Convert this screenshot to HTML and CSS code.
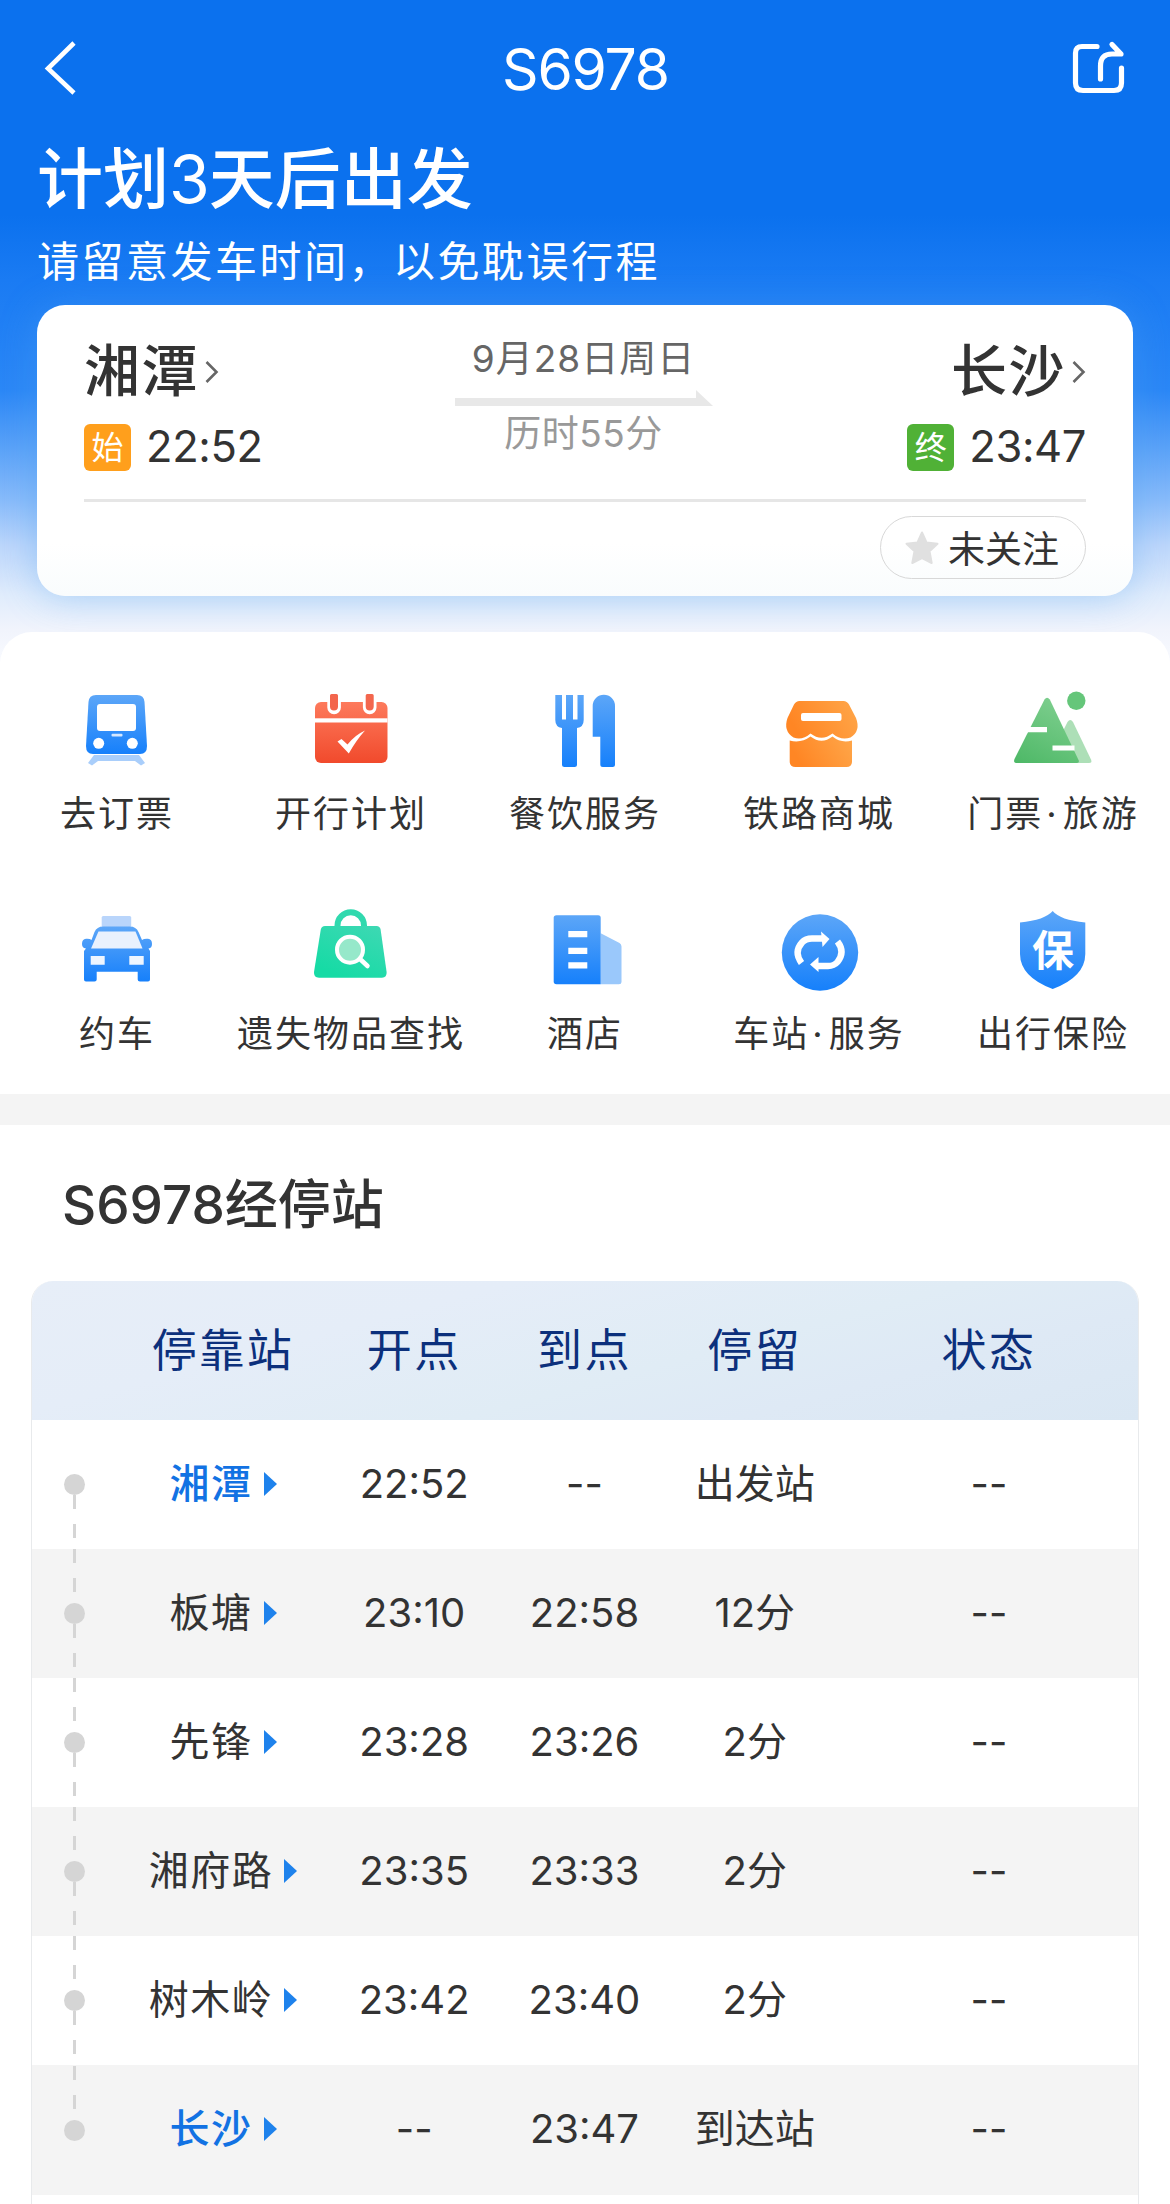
FILE: index.html
```html
<!DOCTYPE html>
<html lang="zh-CN">
<head>
  <meta charset="UTF-8" />
  <meta name="viewport" content="width=device-width, initial-scale=1.0" />
  <title>S6978</title>
  <link rel="stylesheet" href="styles.css">
</head>
<body>
  <svg class="defs" width="0" height="0">
    <defs>
      <linearGradient id="blue" x1="0" y1="0" x2="0" y2="1"><stop offset="0" stop-color="#5ca6f8"/><stop offset="1" stop-color="#1680fb"/></linearGradient>
      <linearGradient id="red" x1="0" y1="0" x2="0" y2="1"><stop offset="0" stop-color="#fd7a5c"/><stop offset="1" stop-color="#f14a2c"/></linearGradient>
      <linearGradient id="orange" x1="0" y1="0.3" x2="1" y2="0"><stop offset="0" stop-color="#ff8624"/><stop offset="1" stop-color="#ffa74a"/></linearGradient>
      <linearGradient id="green" x1="0" y1="1" x2="0.5" y2="0"><stop offset="0" stop-color="#4db866"/><stop offset="1" stop-color="#7bcd8c"/></linearGradient>
      <linearGradient id="mint" x1="1" y1="0" x2="0.4" y2="1"><stop offset="0" stop-color="#3fd8b4"/><stop offset="1" stop-color="#16dba5"/></linearGradient>
    </defs>
  </svg>

  <div class="hero">
    <header class="nav">
      <svg class="back" viewBox="0 0 34 58"><path d="M30 4 4 29.500 30 54" fill="none" stroke="#fff" stroke-width="4.600"/></svg>
      <h1>S6978</h1>
      <svg class="share" viewBox="0 0 56 56" fill="none" stroke="#fff" stroke-width="5.200" stroke-linecap="round" stroke-linejoin="round">
        <path d="M26 6.500H11Q4.500 6.500 4.500 13V43Q4.500 50.500 12 50.500H43Q50.500 50.500 50.500 43V28"/>
        <path d="M29.500 39V26Q29.500 14 41 14H50L41 4.500"/>
      </svg>
    </header>

    <h2 class="plan">计划<span>3</span>天后出发</h2>
    <p class="tip">请留意发车时间，以免耽误行程</p>

    <div class="trip">
      <div class="trip-main">
        <div class="end">
          <div class="city">湘潭<svg class="more" viewBox="0 0 14 24"><path d="M1.500 2 11.500 12 1.500 22" fill="none" stroke="#666" stroke-width="2.600"/></svg></div>
          <div class="time"><span class="tag start">始</span>22:52</div>
        </div>
        <div class="middle">
          <div class="date">9月28日周日</div>
          <svg class="line" viewBox="0 0 258 16"><path d="M0 8H241V0L258 16H0Z" fill="#e8e8e8"/></svg>
          <div class="cost">历时55分</div>
        </div>
        <div class="end right">
          <div class="city">长沙<svg class="more" viewBox="0 0 14 24"><path d="M1.500 2 11.500 12 1.500 22" fill="none" stroke="#666" stroke-width="2.600"/></svg></div>
          <div class="time"><span class="tag stop">终</span>23:47</div>
        </div>
      </div>
      <div class="trip-foot">
        <button class="follow">
          <svg class="star" viewBox="0 0 34 34"><path d="M17 1.500 21.500 11.500 32.500 12.800 24.500 20.300 26.700 32 17 27 7.300 32 9.500 20.300 1.500 12.800 12.500 11.500Z" fill="#e0e0e0" stroke="#e0e0e0" stroke-width="2" stroke-linejoin="round"/></svg>
          <span>未关注</span>
        </button>
      </div>
    </div>
  </div>

  <div class="services">
    <div class="service">
      <svg viewBox="0 0 90 90">
        <path d="M22 69H67L73 77 69 79.500 63 75H26L20 79.500 16 77Z" fill="#a9cefb"/>
        <path d="M24 9H65Q72 9 72.500 16L75 60Q75 68 68 68H21Q14 68 14 60L16.500 16Q17 9 24 9Z" fill="url(#blue)"/>
        <rect x="25" y="18" width="39" height="27" rx="3" fill="#fff"/>
        <circle cx="26.700" cy="57.300" r="5.500" fill="#fff"/><circle cx="60.300" cy="57.300" r="5.500" fill="#fff"/>
        <rect x="39.500" y="47.800" width="11" height="2.600" rx="1" fill="#d5e8ff"/>
      </svg>
      <span>去订票</span>
    </div>
    <div class="service">
      <svg viewBox="0 0 90 90">
        <rect x="9" y="16" width="72.500" height="61" rx="6" fill="url(#red)"/>
        <rect x="9" y="32.300" width="72.500" height="4.200" fill="#fff"/>
        <path d="M22.300 12V21.500A5.800 5.800 0 0 0 33.900 21.500V12M57.900 12V21.500A5.800 5.800 0 0 0 69.500 21.500V12" fill="#fff" stroke="#fff" stroke-width="2"/>
        <path d="M24 9.500Q24 8 25.500 8H30.500Q32 8 32 9.500V20.500A4 4 0 0 1 24 20.500ZM59.700 9.500Q59.700 8 61.200 8H66.200Q67.700 8 67.700 9.500V20.500A4 4 0 0 1 59.700 20.500Z" fill="#f3664d"/>
        <path d="M31.500 55.500 35.500 53 41.500 58.500Q49 49 59 44.500 50 54.500 42.800 67.500Z" fill="#fff"/>
      </svg>
      <span>开行计划</span>
    </div>
    <div class="service">
      <svg viewBox="0 0 90 90" fill="url(#blue)">
        <path d="M15.300 9H22V33.500H26V9H33V33.500H37.500V9H43.700V34Q43.700 41 37 42V78.500Q37 81 34.500 81H24.500Q22 81 22 78.500V42Q15.300 41 15.300 34Z"/>
        <path d="M52.700 20A11.100 11.100 0 0 1 75 20V78.500Q75 81 72.500 81H62.800Q60.300 81 60.300 78.500V50.700H52.700Z"/>
      </svg>
      <span>餐饮服务</span>
    </div>
    <div class="service">
      <svg viewBox="0 0 90 90">
        <path d="M25.500 15H69.500Q73 15 75 18.500L82 32Q87 45 76.500 51.500 67 55 58.500 47.500 47.500 56 36.500 47.500 28 55 19.500 51.500 9 45 13.500 32L20 18.500Q22 15 25.500 15Z" fill="url(#orange)"/>
        <rect x="27" y="27" width="40.500" height="8" rx="2" fill="#fff"/>
        <path d="M15.700 54.500Q27 57.500 36.500 50.500 47.500 59 58.500 50.500 67 57.500 78 54.500V75.500Q78 81 72.500 81H21.500Q15.700 81 15.700 75.500Z" fill="url(#orange)"/>
      </svg>
      <span>铁路商城</span>
    </div>
    <div class="service">
      <svg viewBox="0 0 90 90">
        <path d="M59.500 36Q62.300 32 65 36L83 73.500Q84.500 77 81 77H60L50 55Z" fill="#addfb7"/>
        <path d="M36.500 13.500Q39 10 41.800 13.500L71 75Q71 77 69 77H9Q5 77 6.500 73Z" fill="url(#green)"/>
        <circle cx="68.300" cy="14.700" r="9.200" fill="#65c67a"/>
        <path d="M18 41H39V46.300H18ZM44.500 59.500H66.500V64.500H44.500Z" fill="#fff"/>
      </svg>
      <span>门票<i>·</i>旅游</span>
    </div>
    <div class="service">
      <svg viewBox="0 0 90 90">
        <rect x="29.700" y="10" width="29.500" height="11" rx="1.500" fill="#b9d5fb"/>
        <path d="M31 20.500H58Q64 20.500 66.500 26L70 34Q72 32.500 76 32.800 80 33 80 38 80 42 76.500 42.500L78 45V73.500Q78 75.600 76 75.600H68Q65.700 75.600 65.700 73.500V65.700H24.700V73.500Q24.700 75.600 22.500 75.600H14Q12 75.600 12 73.500V45L14 42.500Q10 42 10 38 10 33 14 32.800 18 32.500 19.500 34L22.500 26Q25 20.500 31 20.500Z" fill="url(#blue)"/>
        <path d="M26.500 25.500H63.500L70.500 42.500H19Z" fill="#e9f1fd"/>
        <path d="M18.700 50H32.700V58.700H18.700ZM57.300 50H71.700V58.700H57.300Z" fill="#eef6ff"/>
      </svg>
      <span>约车</span>
    </div>
    <div class="service">
      <svg viewBox="0 0 90 90">
        <path d="M31.500 21V19.500A13.200 13.200 0 0 1 58 19.500V21" fill="none" stroke="#30d9ae" stroke-width="6"/>
        <path d="M19 20H70.500Q74 20 74.600 23.500L80.600 66Q81 71.700 76 71.700H13Q7.500 71.700 8 66L14.800 23.500Q15.500 20 19 20Z" fill="url(#mint)"/>
        <path d="M54 53 61.500 60" stroke="#fff" stroke-width="4.500" stroke-linecap="round"/>
        <circle cx="44" cy="43.700" r="13" fill="#96e8ca" stroke="#fff" stroke-width="4"/>
      </svg>
      <span>遗失物品查找</span>
    </div>
    <div class="service">
      <svg viewBox="0 0 90 90">
        <path d="M60.700 27.300 79.500 37Q81.500 38 81.500 40.500V76Q81.500 78.300 79 78.300H60.700Z" fill="#9ac8fb"/>
        <path d="M16.500 9.300H58.200Q60.700 9.300 60.700 11.800V78.300H16.500Q13.700 78.300 13.700 75.500V11.800Q13.700 9.300 16.500 9.300Z" fill="url(#blue)"/>
        <path d="M28.300 25H47.300V31.200H28.300ZM28.300 41.700H47.300V48H28.300ZM28.300 56.200H47.300V62.400H28.300Z" fill="#fff"/>
      </svg>
      <span>酒店</span>
    </div>
    <div class="service">
      <svg viewBox="0 0 90 90">
        <circle cx="46" cy="46.500" r="38.200" fill="url(#blue)"/>
        <path d="M27.500 57Q19.500 46 28 36.500 31.500 32.500 38 32.500H48M63.500 35.500Q71.500 46 63.500 56 60 60 54 60H44" fill="none" stroke="#fff" stroke-width="6.400"/>
        <path d="M47 25.500 55.500 33 48.500 41ZM44.500 66 36 58.500 44.500 51Z" fill="#fff"/>
      </svg>
      <span>车站<i>·</i>服务</span>
    </div>
    <div class="service">
      <svg viewBox="0 0 90 90">
        <path d="M44.700 5Q52 14 77.300 16.500V48Q77 71 44.700 83 12.300 71 12 48V16.500Q37 14 44.700 5Z" fill="url(#blue)"/>
        <text x="45" y="60" class="bao">保</text>
      </svg>
      <span>出行保险</span>
    </div>
  </div>

  <div class="stops">
    <h3>S6978经停站</h3>
    <table class="stop-table">
      <colgroup>
        <col class="c-dot"><col class="c-station"><col class="c-time"><col class="c-time"><col class="c-time"><col>
      </colgroup>
      <thead>
        <tr><th></th><th>停靠站</th><th>开点</th><th>到点</th><th>停留</th><th>状态</th></tr>
      </thead>
      <tbody>
        <tr>
          <td class="rail"><div class="track"><i class="none"></i><b></b><i></i></div></td>
          <td class="station on">湘潭</td><td>22:52</td><td>--</td><td>出发站</td><td>--</td>
        </tr>
        <tr>
          <td class="rail"><div class="track"><i></i><b></b><i></i></div></td>
          <td class="station">板塘</td><td>23:10</td><td>22:58</td><td>12分</td><td>--</td>
        </tr>
        <tr>
          <td class="rail"><div class="track"><i></i><b></b><i></i></div></td>
          <td class="station">先锋</td><td>23:28</td><td>23:26</td><td>2分</td><td>--</td>
        </tr>
        <tr>
          <td class="rail"><div class="track"><i></i><b></b><i></i></div></td>
          <td class="station">湘府路</td><td>23:35</td><td>23:33</td><td>2分</td><td>--</td>
        </tr>
        <tr>
          <td class="rail"><div class="track"><i></i><b></b><i></i></div></td>
          <td class="station">树木岭</td><td>23:42</td><td>23:40</td><td>2分</td><td>--</td>
        </tr>
        <tr>
          <td class="rail"><div class="track"><i></i><b></b><i class="none"></i></div></td>
          <td class="station on">长沙</td><td>--</td><td>23:47</td><td>到达站</td><td>--</td>
        </tr>
      </tbody>
    </table>
    <div class="next"></div>
  </div>
</body>
</html>
```
FILE: styles.css
```css
* {
  box-sizing: border-box;
}

body {
  margin: 0;
  height: 2204px;
  overflow: hidden;
  background: #fff;
  color: #333;
  font-family: Inter, "Noto Sans CJK SC", sans-serif;
}

h1, h2, h3, p {
  margin: 0;
}

svg {
  display: block;
}

.defs {
  position: absolute;
}

/* header */
.hero {
  height: 672px;
  padding: 0 37px;
  background: linear-gradient(180deg, #0b71ee 0, #0b71ee 215px, #1a7bf3 280px, #2b87f6 390px, #5ca3f8 450px, #88bbfa 500px, #bcd6fb 545px, #e0ecfc 595px, #f1f4fc 630px, #fbfcff 672px);
}

.nav {
  display: flex;
  align-items: center;
  justify-content: space-between;
  height: 136px;
  padding: 0 6px 0 7px;
}

.back {
  width: 34px;
  height: 58px;
  margin-right: 22px;
}

h1 {
  padding-top: 2px;
  color: #fff;
  font-size: 57px;
  font-weight: 400;
  letter-spacing: -1.2px;
}

.share {
  width: 56px;
  height: 56px;
}

.plan {
  height: 84px;
  color: #fff;
  font-size: 66px;
  font-weight: 500;
  line-height: 86px;
}

.plan span {
  font-weight: 400;
  letter-spacing: -1px;
}

.tip {
  height: 84px;
  color: #fff;
  font-size: 42px;
  line-height: 84px;
  letter-spacing: 2.5px;
}

.trip {
  height: 291px;
  margin-top: 1px;
  padding: 0 47px;
  border-radius: 28px;
  background: linear-gradient(180deg, #fff 82%, #f9fcfd);
  box-shadow: 0 2px 36px rgba(80, 160, 240, 0.38);
}

.trip-main {
  display: flex;
  justify-content: space-between;
  height: 197px;
  border-bottom: 3px solid #e6e6e6;
}

.end {
  width: 300px;
  padding-top: 31px;
}

.city {
  display: flex;
  align-items: center;
  height: 70px;
  font-size: 56px;
  font-weight: 500;
  line-height: 70px;
  letter-spacing: 1.5px;
}

.more {
  width: 14px;
  height: 24px;
  margin: 2px 0 0 6px;
}

.time {
  display: flex;
  align-items: center;
  height: 80px;
  font-size: 43.5px;
  line-height: 44px;
  letter-spacing: -0.4px;
}

.right .city, .right .time {
  justify-content: flex-end;
}

.tag {
  width: 47px;
  height: 47px;
  margin: 3px 15px 0 0;
  border-radius: 6px;
  color: #fff;
  font-size: 32px;
  line-height: 47px;
  letter-spacing: 0;
  text-align: center;
}

.start {
  background: #ff9f1c;
}

.stop {
  background: #50b136;
}

.middle {
  display: flex;
  flex-direction: column;
  align-items: center;
  width: 258px;
  padding-top: 29px;
  margin-right: 3px;
}

.date {
  height: 51px;
  color: #666;
  font-size: 37px;
  line-height: 50px;
  letter-spacing: 1px;
  white-space: nowrap;
}

.line {
  width: 258px;
  height: 16px;
  margin-top: 5px;
}

.cost {
  height: 56px;
  color: #999;
  font-size: 37px;
  line-height: 55px;
  letter-spacing: 0.5px;
}

.trip-foot {
  display: flex;
  justify-content: flex-end;
  padding-top: 14px;
}

.follow {
  display: flex;
  align-items: center;
  width: 206px;
  height: 63px;
  padding: 0 0 0 24px;
  border: 1.5px solid #d8d8d8;
  border-radius: 32px;
  background: transparent;
  color: #333;
  font-family: inherit;
  font-size: 37px;
}

.follow span {
  padding-bottom: 2px;
}

.star {
  width: 34px;
  height: 34px;
  margin-right: 9px;
}

/* service grid */
.services {
  display: grid;
  grid-template-columns: repeat(5, 1fr);
  grid-auto-rows: 220px;
  height: 462px;
  margin-top: -40px;
  padding-top: 54px;
  border-radius: 32px 32px 0 0;
  background: #fff;
}

.service {
  display: flex;
  flex-direction: column;
  align-items: center;
}

.service svg {
  width: 90px;
  height: 90px;
}

.service span {
  margin-top: 12px;
  font-size: 36px;
  line-height: 52px;
  letter-spacing: 2px;
  white-space: nowrap;
}

.service i {
  padding: 0 4px 0 3px;
  font-style: normal;
}

.bao {
  fill: #fff;
  font-size: 42px;
  font-weight: 700;
  text-anchor: middle;
}

/* stop list */
.stops {
  padding: 0 31px;
  border-top: 31px solid #f4f4f4;
}

h3 {
  height: 156px;
  padding-left: 31px;
  font-size: 53px;
  font-weight: 500;
  line-height: 160px;
  letter-spacing: 0;
}

.stop-table {
  width: 1108px;
  table-layout: fixed;
  border-collapse: separate;
  border-spacing: 0;
  border: solid #e8eaec;
  border-width: 0 1px;
  border-radius: 22px 22px 0 0;
  overflow: hidden;
}

.c-dot {
  width: 85px;
}

.c-station {
  width: 212px;
}

.c-time {
  width: 170.3px;
}

thead {
  background: linear-gradient(165deg, #e7eef8 0%, #e5edf8 30%, #e0ecf5 58%, #dee9f5 75%, #dae7f3 100%);
}

th {
  height: 139px;
  padding: 0 0 6px;
  color: #0c307c;
  font-size: 45px;
  font-weight: 400;
  letter-spacing: 2.5px;
}

td {
  height: 129px;
  padding: 0 0 2px;
  font-size: 40px;
  line-height: 60px;
  text-align: center;
}

tbody tr:nth-child(even) {
  background: #f4f4f4;
}

tbody tr:last-child td {
  height: 130px;
}

.station {
  letter-spacing: 1.5px;
}

.station::after {
  content: "";
  display: inline-block;
  margin-left: 11px;
  border: solid transparent;
  border-width: 12px 0 12px 13px;
  border-left-color: #1e82ec;
  vertical-align: 2px;
}

.on {
  color: #1272e3;
  font-weight: 500;
}

.rail {
  padding: 0;
}

.track {
  display: flex;
  flex-direction: column;
  align-items: center;
  height: 129px;
}

.track b {
  width: 21px;
  height: 21px;
  border-radius: 50%;
  background: #d5d5d5;
}

.track i {
  width: 3px;
  height: 54px;
  background: repeating-linear-gradient(180deg, #d5d5d5 0 14px, transparent 14px 29px);
}

.track .none {
  background: none;
}

.next {
  height: 9px;
  border: solid #e8eaec;
  border-width: 0 1px;
}
```
